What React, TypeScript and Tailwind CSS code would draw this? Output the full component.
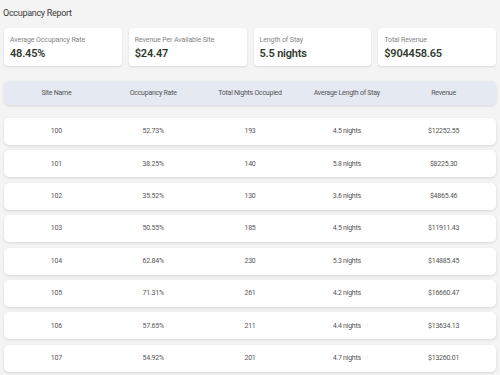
import React from "react";

const stats = [
  { label: "Average Occupancy Rate", value: "48.45%" },
  { label: "Revenue Per Available Site", value: "$24.47" },
  { label: "Length of Stay", value: "5.5 nights" },
  { label: "Total Revenue", value: "$904458.65" },
];

const columns = [
  "Site Name",
  "Occupancy Rate",
  "Total Nights Occupied",
  "Average Length of Stay",
  "Revenue",
];

const rows = [
  ["100", "52.73%", "193", "4.5 nights", "$12252.55"],
  ["101", "38.25%", "140", "5.8 nights", "$8225.30"],
  ["102", "35.52%", "130", "3.6 nights", "$4865.46"],
  ["103", "50.55%", "185", "4.5 nights", "$11911.43"],
  ["104", "62.84%", "230", "5.3 nights", "$14885.45"],
  ["105", "71.31%", "261", "4.2 nights", "$16660.47"],
  ["106", "57.65%", "211", "4.4 nights", "$13634.13"],
  ["107", "54.92%", "201", "4.7 nights", "$13260.01"],
];

const App = () => {
  return (
    <div
      className="w-[500px] h-[375px] overflow-hidden bg-[#f4f4f4] px-[4px]"
      style={{ fontFamily: "Roboto, 'Liberation Sans', sans-serif" }}
    >
      <h1 className="pt-[8px] -ml-[1px] text-[9px] leading-[11px] text-[#3a3a3a] tracking-[-0.3px]">
        Occupancy Report
      </h1>

      <div className="grid grid-cols-4 gap-[7px] mt-[9px]">
        {stats.map((s) => (
          <div
            key={s.label}
            className="h-[38px] bg-white rounded-[4px] shadow-[0_1px_2px_rgba(0,0,0,0.12)] px-[6px] pt-[8px]"
          >
            <div className="text-[7px] leading-[9px] text-[#858585] tracking-[-0.1px]">
              {s.label}
            </div>
            <div className="text-[11px] leading-[13px] font-semibold text-[#2f3a30] mt-[2px] tracking-[-0.2px]">
              {s.value}
            </div>
          </div>
        ))}
      </div>

      <div className="grid grid-cols-5 items-center h-[24px] mt-[15px] px-[4px] rounded-[5px] bg-[#e4e9f2] shadow-[0_1px_3px_rgba(0,0,0,0.12)]">
        {columns.map((c) => (
          <div
            key={c}
            className="text-center text-[7px] text-[#555] tracking-[-0.25px]"
          >
            {c}
          </div>
        ))}
      </div>

      <div className="flex flex-col gap-[5.4px] mt-[13px]">
        {rows.map((r) => (
          <div
            key={r[0]}
            className="grid grid-cols-5 items-center h-[27px] px-[4px] rounded-[5px] bg-white shadow-[0_1px_3px_rgba(0,0,0,0.12)]"
          >
            {r.map((cell, i) => (
              <div
                key={i}
                className="text-center text-[7px] text-[#555] tracking-[-0.25px]"
              >
                {cell}
              </div>
            ))}
          </div>
        ))}
      </div>
    </div>
  );
};

export default App;
